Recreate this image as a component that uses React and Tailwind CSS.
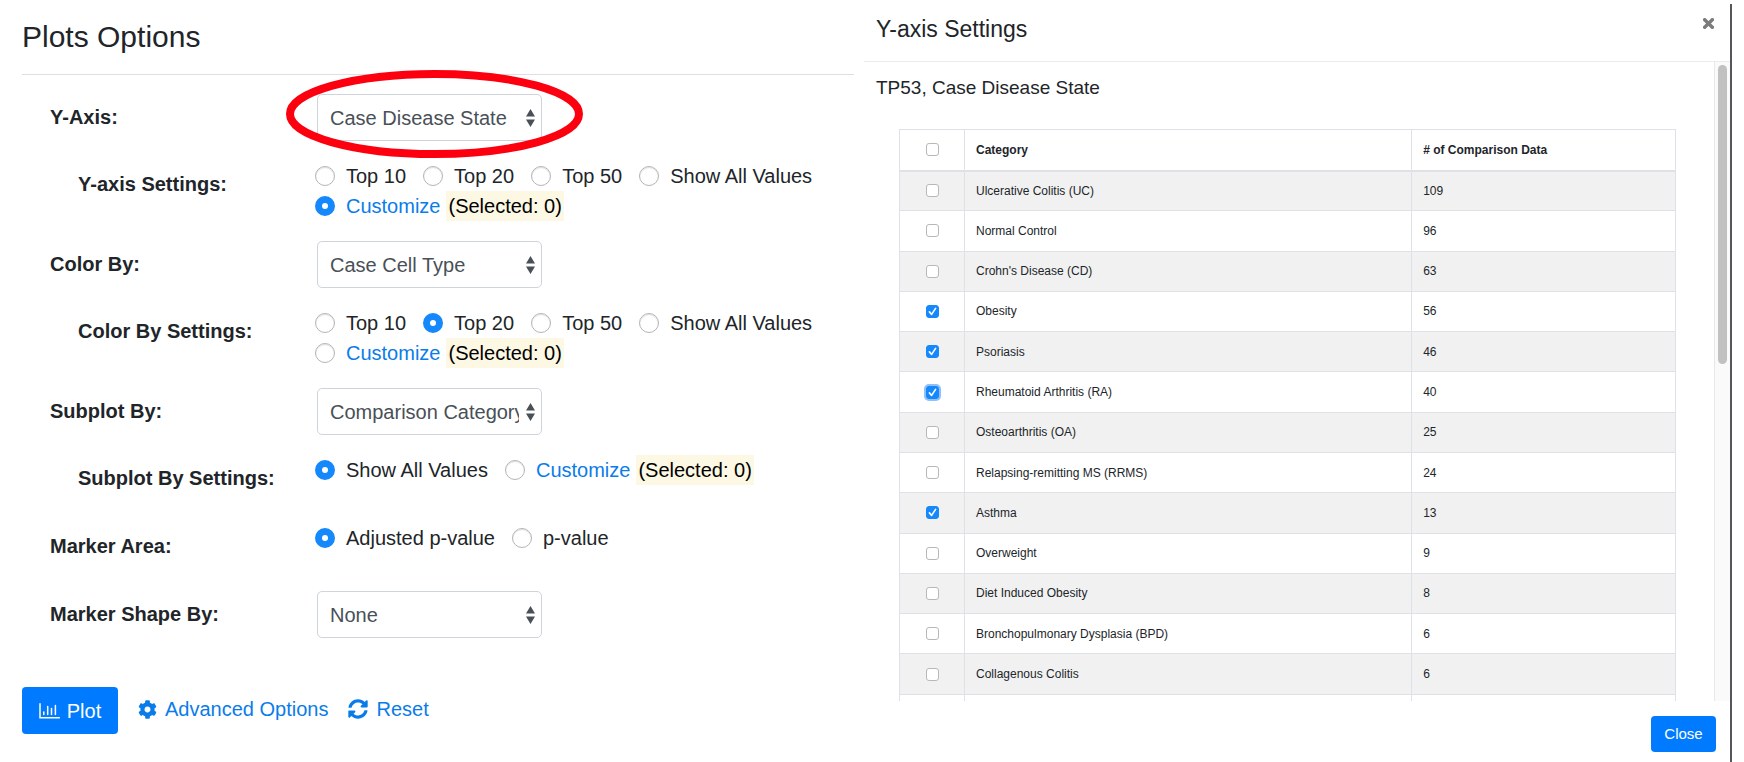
import React from "react";
import { FaCog, FaSyncAlt } from "react-icons/fa";

function Caret() {
  return (
    <svg viewBox="0 0 9 18" className="pointer-events-none absolute right-[7px] top-1/2 h-[18px] w-[9px] -translate-y-1/2 fill-[#495057]" aria-hidden="true">
      <path d="M4.5 0 9 7.4H0zM4.5 18 0 10.6h9z" />
    </svg>
  );
}

function Select({ id, value, children }) {
  return (
    <div className="relative ml-[2px] h-[47px] w-[225px]">
      <select
        id={id}
        defaultValue={value}
        className="h-full w-full appearance-none rounded-[5px] border border-[#ced4da] bg-white pl-[12px] pr-[22px] text-[20px] text-[#495057]"
      >
        <option>{value}</option>
      </select>
      <Caret />
      {children}
    </div>
  );
}

function Row({ label, htmlFor, nested, children }) {
  const cls = nested
    ? "w-[265px] shrink-0 pl-[28px] font-bold leading-[46px]"
    : "w-[265px] shrink-0 font-bold leading-[46px]";
  return (
    <div
      className={htmlFor ? "flex items-start" : "flex min-h-[48px] items-start"}
      role={htmlFor ? undefined : "radiogroup"}
      aria-label={htmlFor ? undefined : label}
    >
      {htmlFor ? (
        <label htmlFor={htmlFor} className={cls}>{label}</label>
      ) : (
        <span className={cls}>{label}</span>
      )}
      {children}
    </div>
  );
}

function Radio({ name, label, checked, link }) {
  return (
    <label className="flex h-[30px] items-center gap-[11px]">
      <input
        type="radio"
        name={name}
        defaultChecked={checked}
        className="size-5 shrink-0 appearance-none rounded-full border border-[#b5b5b5] bg-white shadow-[inset_0_1px_1px_#e0e0e0] checked:border-[7px] checked:border-[#1588fb] checked:shadow-none"
      />
      {link ? <a href="#customize" className="text-[#0a7cea]">{label}</a> : <span>{label}</span>}
    </label>
  );
}

function Customize({ name, checked }) {
  return (
    <div className="flex items-center gap-[6px]">
      <Radio name={name} label="Customize" checked={checked} link />
      <span className="bg-[#fcf8e3] px-[2px] leading-[30px] text-black">(Selected: 0)</span>
    </div>
  );
}

function TopChoices({ name, selected }) {
  return (
    <div className="flex h-[60px] flex-wrap gap-x-[17px]">
      {["Top 10", "Top 20", "Top 50", "Show All Values"].map((t) => (
        <Radio key={t} name={name} label={t} checked={selected === t} />
      ))}
      <div className="w-full">
        <Customize name={name} checked={selected === "Customize"} />
      </div>
    </div>
  );
}

const rows = [
  ["Ulcerative Colitis (UC)", 109],
  ["Normal Control", 96],
  ["Crohn's Disease (CD)", 63],
  ["Obesity", 56, true],
  ["Psoriasis", 46, true],
  ["Rheumatoid Arthritis (RA)", 40, true, true],
  ["Osteoarthritis (OA)", 25],
  ["Relapsing-remitting MS (RRMS)", 24],
  ["Asthma", 13, true],
  ["Overweight", 9],
  ["Diet Induced Obesity", 8],
  ["Bronchopulmonary Dysplasia (BPD)", 6],
  ["Collagenous Colitis", 6],
];

function Check({ label, checked, focused }) {
  return (
    <span className="relative mx-auto block size-[13px]">
      <input
        type="checkbox"
        aria-label={label}
        defaultChecked={checked}
        className={
          "peer block size-full appearance-none rounded-[3px] border border-[#b8b8b8] bg-white checked:border-[#1588fb] checked:bg-[#1588fb]" +
          (focused ? " ring-2 ring-[#8fc0f8]" : "")
        }
      />
      <svg viewBox="0 0 13 13" className="pointer-events-none absolute inset-0 hidden fill-none stroke-white stroke-[1.6] peer-checked:block" aria-hidden="true">
        <path d="M3.4 6.9 5.6 9.4 9.6 3.4" strokeLinecap="round" strokeLinejoin="round" />
      </svg>
    </span>
  );
}

function CategoryTable() {
  return (
    <table className="h-[606px] w-full table-fixed border-collapse border border-[#dee2e6] text-left text-[12px] leading-[18px]">
      <colgroup>
        <col className="w-[65px]" />
        <col />
        <col className="w-[34%]" />
      </colgroup>
      <thead>
        <tr className="h-[41px] border-b-2 border-[#dee2e6]">
          <th className="border-x border-[#dee2e6]"><Check label="Select all" /></th>
          <th className="border-x border-[#dee2e6] px-[11px]">Category</th>
          <th className="border-x border-[#dee2e6] px-[11px]"># of Comparison Data</th>
        </tr>
      </thead>
      <tbody>
        {rows.map(([name, count, checked, focused]) => (
          <tr key={name} className="h-[40px] odd:bg-[#f1f1f1]">
            <td className="border border-[#dee2e6]"><Check label={name} checked={checked} focused={focused} /></td>
            <td className="border border-[#dee2e6] px-[11px]">{name}</td>
            <td className="border border-[#dee2e6] px-[11px]">{count}</td>
          </tr>
        ))}
        <tr className="h-[40px]">
          <td className="border border-[#dee2e6]" />
          <td className="border border-[#dee2e6]" />
          <td className="border border-[#dee2e6]" />
        </tr>
      </tbody>
    </table>
  );
}

function PlotIcon() {
  return (
    <svg viewBox="0 0 21 16" className="h-[16px] w-[21px] fill-none stroke-white stroke-[1.5]" aria-hidden="true">
      <path d="M1 .8V14.8H20.3M4.8 11.5V9M8.7 11.5V3.6M12.5 11.5V5.6M16.4 11.5V2.6" strokeLinecap="round" />
    </svg>
  );
}

function CloseIcon() {
  return (
    <svg viewBox="0 0 11 11" className="size-[11px] fill-none stroke-[#7b7b7b] stroke-[3.4]" aria-hidden="true">
      <path d="M1.7 1.7 9.3 9.3M9.3 1.7 1.7 9.3" strokeLinecap="square" strokeLinejoin="round" />
    </svg>
  );
}

function PlotOptions() {
  return (
    <main className="flex flex-col pl-[22px] text-[20px] leading-[30px]">
      <h1 className="flex h-[75px] items-center border-b border-[#dfdfdf] text-[30px]">Plots Options</h1>
      <form className="flex flex-col gap-5 pl-[28px] pt-[19px]">
        <Row label="Y-Axis:" htmlFor="y-axis">
          <Select id="y-axis" value="Case Disease State">
            <svg viewBox="0 0 297 88" className="pointer-events-none absolute -left-[31px] -top-[24px] h-[88px] w-[297px] max-w-none fill-none stroke-[#fd0010] stroke-[8]" aria-hidden="true">
              <ellipse cx="148.5" cy="44" rx="144.5" ry="40" />
            </svg>
          </Select>
        </Row>
        <Row label="Y-axis Settings:" nested>
          <TopChoices name="y-settings" selected="Customize" />
        </Row>
        <Row label="Color By:" htmlFor="color-by">
          <Select id="color-by" value="Case Cell Type" />
        </Row>
        <Row label="Color By Settings:" nested>
          <TopChoices name="color-settings" selected="Top 20" />
        </Row>
        <Row label="Subplot By:" htmlFor="subplot-by">
          <Select id="subplot-by" value="Comparison Category" />
        </Row>
        <Row label="Subplot By Settings:" nested>
          <div className="flex gap-[17px]">
            <Radio name="subplot" label="Show All Values" checked />
            <Customize name="subplot" />
          </div>
        </Row>
        <Row label="Marker Area:">
          <div className="flex gap-[17px]">
            <Radio name="area" label="Adjusted p-value" checked />
            <Radio name="area" label="p-value" />
          </div>
        </Row>
        <Row label="Marker Shape By:" htmlFor="shape">
          <Select id="shape" value="None" />
        </Row>
      </form>
      <div className="mt-[49px] flex items-start gap-[20px] text-[#0a7cea]">
        <button type="button" className="flex h-[47px] w-[96px] items-center justify-center gap-[7px] rounded-[4px] bg-[#007bff] text-white">
          <PlotIcon />
          Plot
        </button>
        <a href="#advanced" className="flex h-[44px] items-center gap-[8px]"><FaCog size={19} />Advanced Options</a>
        <a href="#reset" className="flex h-[44px] items-center gap-[8px]"><FaSyncAlt size={20} />Reset</a>
      </div>
    </main>
  );
}

function SettingsDialog() {
  return (
    <section role="dialog" aria-labelledby="dialog-title" className="mt-[4px] flex min-h-0 flex-col border-r-2 border-[#55565a]">
      <header className="flex h-[58px] shrink-0 items-start justify-between border-b border-[#e9ecef] pl-[12px] pr-[16px] pt-[10px]">
        <h2 id="dialog-title" className="text-[23px] leading-[30px]">Y-axis Settings</h2>
        <button type="button" aria-label="Close dialog" className="mt-1"><CloseIcon /></button>
      </header>
      <div className="flex min-h-0 flex-1">
        <div className="min-w-0 flex-1 overflow-hidden pr-[38px]">
          <h3 className="pb-[27px] pl-[12px] pt-[12px] text-[19px] leading-[28px]">TP53, Case Disease State</h3>
          <div className="pl-[35px]"><CategoryTable /></div>
        </div>
        <div className="w-[16px] border-l border-[#e8e8e8] bg-[#fafafa] px-[3px] pt-[3px]">
          <div className="h-[47%] rounded-full bg-[#c1c1c1]" />
        </div>
      </div>
      <footer className="flex shrink-0 justify-end pb-[10px] pr-[14px] pt-[15px]">
        <button type="button" className="h-[36px] w-[65px] rounded-[4px] bg-[#007bff] text-[15px] text-white">Close</button>
      </footer>
    </section>
  );
}

export default function App() {
  return (
    <div className="grid h-screen min-h-[762px] grid-cols-[minmax(0,854fr)_minmax(0,868fr)] grid-rows-1 gap-[10px] bg-white pr-[12px] font-['Liberation_Sans',Arial,sans-serif] text-[#212529]">
      <PlotOptions />
      <SettingsDialog />
    </div>
  );
}
